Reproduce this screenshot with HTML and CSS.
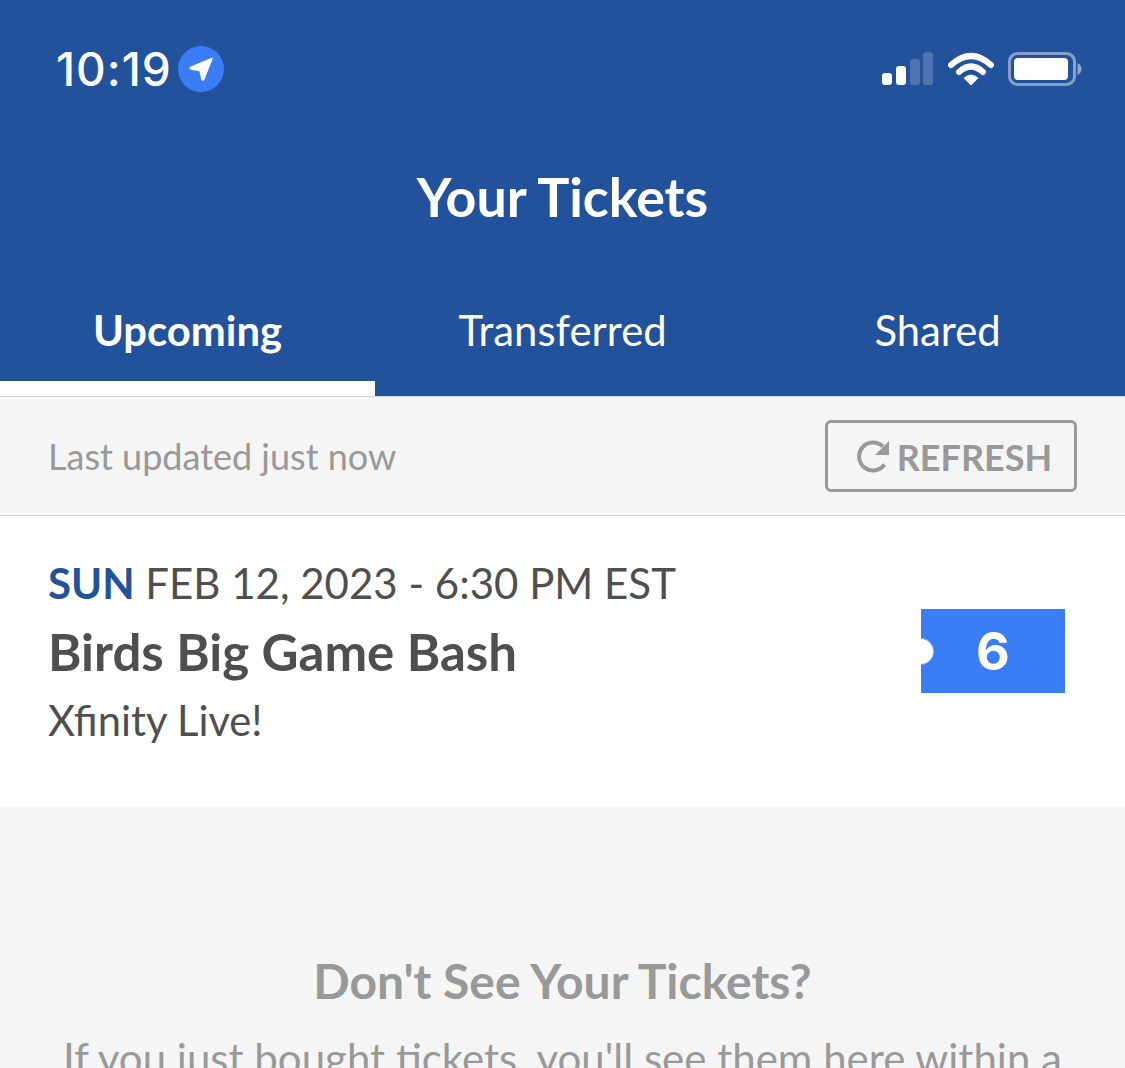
FILE: index.html
```html
<!DOCTYPE html>
<html lang="en">
<head>
    <meta charset="UTF-8">
    <title>Your Tickets</title>
    <link rel="stylesheet" href="styles.css">
</head>
<body>

    <div class="header">
        <div class="status-bar">
            <div class="status-left">
                <span class="clock">10:19</span>
                <span class="location">
                    <svg width="26" height="26" viewBox="0 0 26 26"><path d="M24 2.5 L2.5 11.5 Q1.8 12.6 3 13 L12 14.5 L14 23.5 Q14.6 24.4 15.6 23.6 Z" fill="#fff" stroke="#fff" stroke-width="1.5" stroke-linejoin="round"/></svg>
                </span>
            </div>
            <div class="status-right">
                <svg class="signal" width="52" height="34" viewBox="0 0 52 34">
                    <rect x="0" y="21" width="10" height="12" rx="3" fill="#fff"/>
                    <rect x="14" y="14" width="10" height="19" rx="3" fill="#fff"/>
                    <rect x="28" y="7" width="10" height="26" rx="3" fill="#fff" opacity="0.2"/>
                    <rect x="41" y="0" width="10" height="33" rx="3" fill="#fff" opacity="0.2"/>
                </svg>
                <svg class="wifi" width="46" height="34" viewBox="0 0 46 34">
                    <path d="M3 13 Q23 -5 43 13" fill="none" stroke="#fff" stroke-width="6" stroke-linecap="round"/>
                    <path d="M11 20 Q23 9 35 20" fill="none" stroke="#fff" stroke-width="6" stroke-linecap="round"/>
                    <path d="M15.5 26 Q23 19 30.5 26 L23 33.5 Z" fill="#fff"/>
                </svg>
                <svg class="battery" width="74" height="34" viewBox="0 0 74 34">
                    <rect x="1.5" y="1.5" width="65" height="31" rx="8" fill="none" stroke="#fff" stroke-opacity="0.45" stroke-width="3"/>
                    <rect x="6" y="6" width="54" height="22" rx="4" fill="#fff"/>
                    <path d="M69.5 11 Q73.5 13 73.5 17 Q73.5 21 69.5 23 Z" fill="#fff" fill-opacity="0.5"/>
                </svg>
            </div>
        </div>
        <h1 class="title">Your Tickets</h1>
        <div class="tabs">
            <div class="tab active">Upcoming</div>
            <div class="tab">Transferred</div>
            <div class="tab">Shared</div>
        </div>
    </div>

    <div class="update-bar">
        <span class="updated">Last updated just now</span>
        <button class="refresh">
            <svg width="34" height="36" viewBox="0 0 34 36"><path d="M27.5 25.5 A14 14 0 1 1 26 7.5" fill="none" stroke="#999" stroke-width="4"/><path d="M32 2 V16 H18 Z" fill="#999"/></svg>
            REFRESH
        </button>
    </div>

    <div class="event">
        <div class="event-info">
            <div class="event-date"><b>SUN</b> FEB 12, 2023 - 6:30 PM EST</div>
            <div class="event-name">Birds Big Game Bash</div>
            <div class="event-venue">Xfinity Live!</div>
        </div>
        <div class="ticket-count">
            <span class="notch"></span>
            6
        </div>
    </div>

    <div class="help">
        <h2 class="help-title">Don't See Your Tickets?</h2>
        <p class="help-text">If you just bought tickets, you'll see them here within a</p>
    </div>

</body>
</html>
```

FILE: styles.css
```css
html, body {
    margin: 0;
    padding: 0;
    height: 1068px;
    overflow: hidden;
}
body {
    background: #f5f5f5;
    font-family: Lato, Arial, sans-serif;
    color: #4f4f4f;
}
.header {
    background: #23529c;
    color: white;
    height: 396px;
    display: flex;
    flex-direction: column;
}
.status-bar {
    display: flex;
    justify-content: space-between;
    align-items: center;
    padding: 44px 43px 0 56px;
    height: 50px;
}
.status-left {
    display: flex;
    align-items: center;
    gap: 6px;
}
.clock {
    font-family: Inter, "Liberation Sans", sans-serif;
    font-size: 46px;
    font-weight: 500;
    line-height: 50px;
    letter-spacing: 1px;
}
.location {
    width: 46px;
    height: 46px;
    border-radius: 50%;
    background: #3b7df5;
    display: flex;
    align-items: center;
    justify-content: center;
}
.status-right {
    display: flex;
    align-items: center;
    gap: 14px;
}
.title {
    margin: 0;
    padding-top: 76px;
    height: 52px;
    line-height: 52px;
    font-size: 53.8px;
    font-weight: 700;
    text-align: center;
}
.tabs {
    display: flex;
    margin-top: auto;
}
.tab {
    flex: 1;
    height: 85px;
    line-height: 39px;
    text-align: center;
    font-size: 41.8px;
    box-sizing: border-box;
}
.tab.active {
    font-weight: 700;
    border-bottom: 15px solid white;
}
.update-bar {
    height: 120px;
    box-sizing: border-box;
    border-top: 1px solid #d8d8d8;
    border-bottom: 1px solid #d8d8d8;
    display: flex;
    align-items: center;
    justify-content: space-between;
    padding: 0 48px 1px;
}
.updated {
    font-size: 36px;
    color: #999;
    padding-top: 1px;
}
.refresh {
    width: 252px;
    height: 72px;
    background: none;
    border: 3px solid #999;
    border-radius: 6px;
    color: #999;
    font-family: inherit;
    font-size: 36px;
    font-weight: 700;
    display: flex;
    align-items: center;
    justify-content: center;
    gap: 6px;
    padding: 2px 0 0 7px;
}
.event {
    background: white;
    height: 291px;
    display: flex;
    align-items: flex-start;
    justify-content: space-between;
    padding: 0 60px 0 48px;
    box-sizing: border-box;
}
.event-info {
    padding-top: 43px;
}
.event-date {
    font-size: 42px;
    line-height: 48px;
}
.event-date b {
    color: #23529c;
}
.event-name {
    font-size: 51px;
    font-weight: 700;
    line-height: 60px;
    margin-top: 15px;
}
.event-venue {
    font-size: 41.7px;
    line-height: 50px;
    margin-top: 13px;
}
.ticket-count {
    position: relative;
    overflow: hidden;
    margin-top: 93px;
    width: 144px;
    height: 84px;
    background: #3b7df5;
    color: white;
    font-family: Inter, "Liberation Sans", sans-serif;
    font-size: 52px;
    font-weight: 700;
    line-height: 86px;
    text-align: center;
}
.notch {
    position: absolute;
    left: -13px;
    top: 30px;
    width: 25px;
    height: 25px;
    border-radius: 50%;
    background: white;
    box-shadow: 0 0 0 1px rgba(255, 255, 255, 0.4);
}
.help {
    text-align: center;
    padding-top: 146px;
}
.help-title {
    margin: 0;
    font-size: 48px;
    line-height: 56px;
    font-weight: 700;
    color: #999;
}
.help-text {
    margin: 24px 0 0;
    font-size: 42px;
    line-height: 50px;
    color: #999;
    white-space: nowrap;
}
```
